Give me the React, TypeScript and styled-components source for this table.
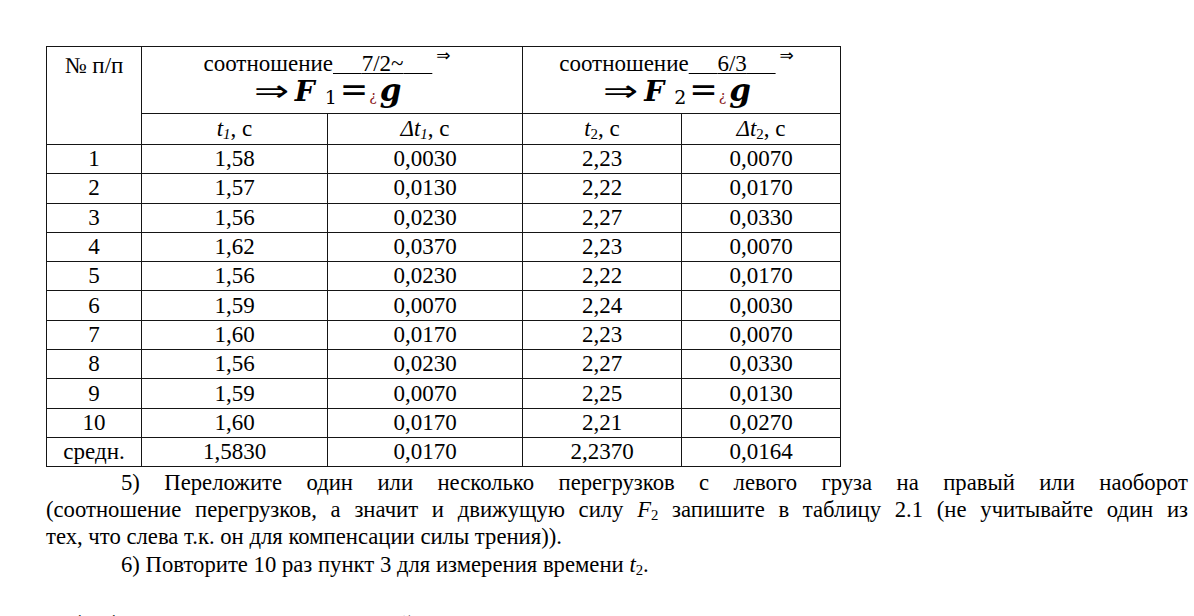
import React from "react";
import styled, { createGlobalStyle } from "styled-components";

const Global = createGlobalStyle`
  html, body { margin: 0; padding: 0; background: #fff; }
  body { font-family: "Liberation Serif", "Times New Roman", serif; color: #000; }
`;

const Page = styled.div`
  padding: 46px 0 0 46px;
  width: 1142px;
`;

const Table = styled.table`
  border-collapse: collapse;
  table-layout: fixed;
  width: 795px;
  font-size: 23px;
  font-family: "Liberation Serif", "Times New Roman", serif;
`;

const Row = styled.tr<{ $h: number }>`
  height: ${(p) => p.$h}px;
`;

const Cell = styled.td<{ $top?: boolean }>`
  border: 1px solid #151515;
  padding: 0;
  text-align: center;
  vertical-align: ${(p) => (p.$top ? "top" : "middle")};
  line-height: 28px;
  white-space: nowrap;
`;

const NumHead = styled(Cell)`
  padding-top: 6px;
  line-height: 26px;
`;

const RatioCell = styled(Cell)`
  padding: 4px 10px 0 0;
`;

const RatioLine = styled.div`
  line-height: 26px;
  height: 26px;
`;

const Blank = styled.span`
  text-decoration: underline;
  text-decoration-thickness: 1px;
  text-underline-offset: 2px;
`;

const SupArrow = styled.span`
  font-family: "DejaVu Sans", sans-serif;
  font-size: 17px;
  line-height: 0;
  vertical-align: 10px;
  margin-left: 4px;
`;

const FormulaLine = styled.div`
  font-family: "DejaVu Serif", serif;
  font-size: 27px;
  line-height: 30px;
  height: 32px;
`;

const Implies = styled.span`
  display: inline-block;
  font-family: "DejaVu Sans", sans-serif;
  font-size: 30px;
  line-height: 0;
  transform: scaleX(1.4);
  margin-right: 11px;
  margin-left: 6px;
`;

const Var = styled.span`
  font-family: "DejaVu Serif", serif;
  font-weight: bold;
  font-style: italic;
  font-size: 28px;
  line-height: 0;
`;

const GVar = styled(Var)`
  font-size: 31px;
  margin-left: 2px;
`;

const FSub = styled.span`
  font-family: "DejaVu Serif", serif;
  font-size: 19px;
  line-height: 0;
  vertical-align: -3px;
  margin-left: 10px;
  margin-right: 3px;
`;

const Eq = styled.span`
  font-family: "DejaVu Sans", sans-serif;
  font-size: 34px;
  line-height: 0;
`;

const Inverted = styled.span`
  font-family: "DejaVu Serif", serif;
  color: #8b1a1a;
  font-size: 14px;
  line-height: 0;
  margin: 0 1px;
`;

const SubHead = styled(Cell)`
  line-height: 30px;
`;

const It = styled.i`
  font-style: italic;
`;

const ISub = styled.sub`
  font-size: 0.65em;
  font-style: italic;
  vertical-align: -3px;
  line-height: 0;
`;

const USub = styled.sub`
  font-size: 0.65em;
  vertical-align: -3px;
  line-height: 0;
`;

const Text = styled.div`
  font-family: "Liberation Serif", "Times New Roman", serif;
  font-size: 22.7px;
  line-height: 27px;
  margin-top: 2px;
  width: 1142px;
`;

const Line = styled.div<{ $indent?: boolean; $justify?: boolean; $gap?: number }>`
  padding-left: ${(p) => (p.$indent ? 75 : 0)}px;
  margin-top: ${(p) => p.$gap ?? 0}px;
  text-align: ${(p) => (p.$justify ? "justify" : "left")};
  text-align-last: ${(p) => (p.$justify ? "justify" : "left")};
  white-space: nowrap;
`;

const Heading = styled.div`
  font-weight: bold;
  font-style: italic;
  margin-top: 33px;
  padding-left: 6px;
`;

type R = [string, string, string, string, string];

const rows: R[] = [
  ["1", "1,58", "0,0030", "2,23", "0,0070"],
  ["2", "1,57", "0,0130", "2,22", "0,0170"],
  ["3", "1,56", "0,0230", "2,27", "0,0330"],
  ["4", "1,62", "0,0370", "2,23", "0,0070"],
  ["5", "1,56", "0,0230", "2,22", "0,0170"],
  ["6", "1,59", "0,0070", "2,24", "0,0030"],
  ["7", "1,60", "0,0170", "2,23", "0,0070"],
  ["8", "1,56", "0,0230", "2,27", "0,0330"],
  ["9", "1,59", "0,0070", "2,25", "0,0130"],
  ["10", "1,60", "0,0170", "2,21", "0,0270"],
  ["средн.", "1,5830", "0,0170", "2,2370", "0,0164"],
];

const pad = "\u00a0\u00a0\u00a0\u00a0\u00a0";

const Ratio: React.FC<{ value: string; idx: string }> = ({ value, idx }) => (
  <RatioCell colSpan={2} $top>
    <RatioLine>
      соотношение
      <Blank>
        {pad}
        {value}
        {pad}
      </Blank>
      <SupArrow>⇒</SupArrow>
    </RatioLine>
    <FormulaLine>
      <Implies>⇒</Implies>
      <Var>F</Var>
      <FSub>{idx}</FSub>
      <Eq>=</Eq>
      <Inverted>¿</Inverted>
      <GVar>g</GVar>
    </FormulaLine>
  </RatioCell>
);

export default function App() {
  return (
    <Page>
      <Global />
      <Table>
        <colgroup>
          <col style={{ width: 95 }} />
          <col style={{ width: 186 }} />
          <col style={{ width: 195 }} />
          <col style={{ width: 159 }} />
          <col style={{ width: 159 }} />
        </colgroup>
        <tbody>
          <Row $h={67}>
            <NumHead rowSpan={2} $top>
              № п/п
            </NumHead>
            <Ratio value="7/2~" idx="1" />
            <Ratio value="6/3" idx="2" />
          </Row>
          <Row $h={30}>
            <SubHead>
              <It>t</It>
              <ISub>1</ISub>, с
            </SubHead>
            <SubHead>
              <It>Δt</It>
              <ISub>1</ISub>, с
            </SubHead>
            <SubHead>
              <It>t</It>
              <USub>2</USub>, с
            </SubHead>
            <SubHead>
              <It>Δt</It>
              <USub>2</USub>, с
            </SubHead>
          </Row>
          {rows.map((r) => (
            <Row $h={29.3} key={r[0]}>
              {r.map((v, i) => (
                <Cell key={i}>{v}</Cell>
              ))}
            </Row>
          ))}
        </tbody>
      </Table>
      <Text>
        <Line $indent $justify>
          5) Переложите один или несколько перегрузков с левого груза на правый или наоборот
        </Line>
        <Line $justify>
          (соотношение перегрузков, а значит и движущую силу <It>F</It>
          <USub>2</USub> запишите в таблицу 2.1 (не учитывайте один из
        </Line>
        <Line>тех, что слева т.к. он для компенсации силы трения)).</Line>
        <Line $indent $gap={1}>
          6) Повторите 10 раз пункт 3 для измерения времени <It>t</It>
          <USub>2</USub>.
        </Line>
        <Heading>Обработка результатов измерений</Heading>
      </Text>
    </Page>
  );
}
